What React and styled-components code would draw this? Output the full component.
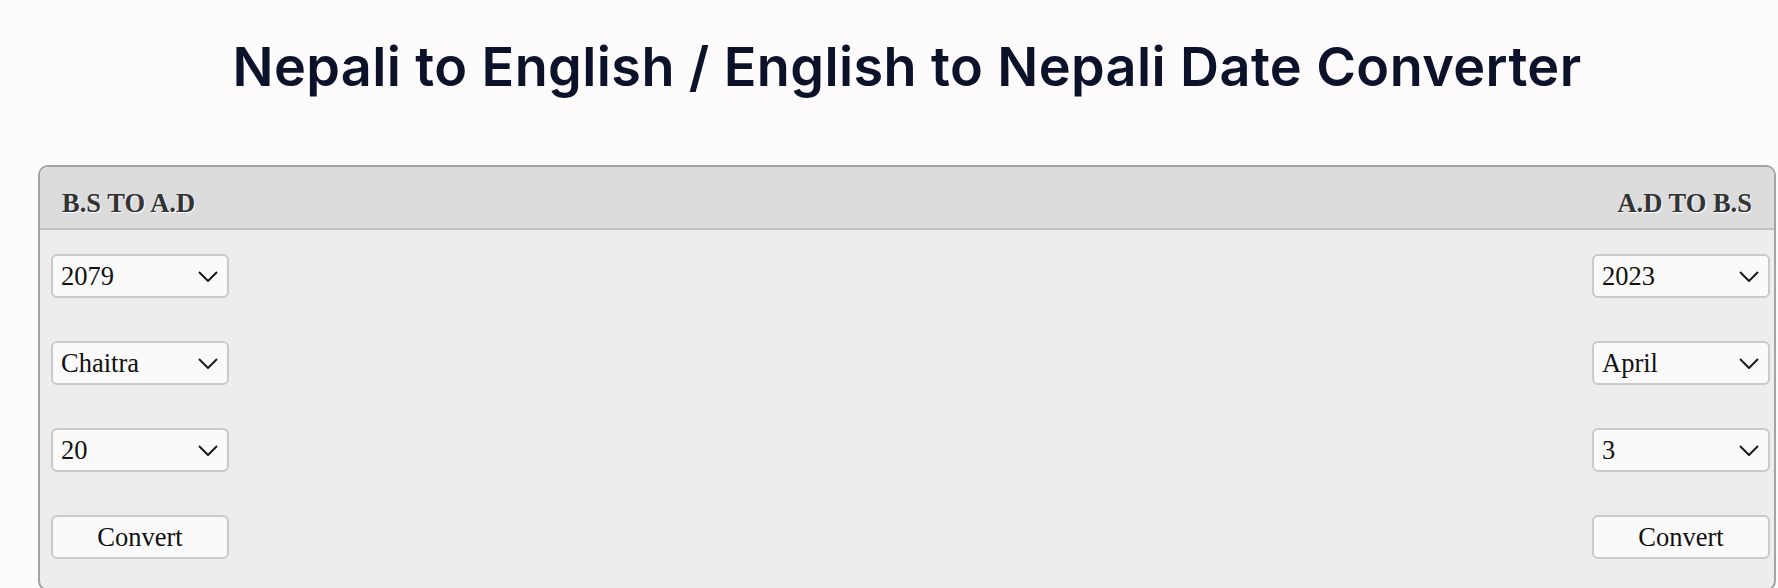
import React from "react";
import styled, { createGlobalStyle } from "styled-components";

const GlobalStyle = createGlobalStyle`
  html, body {
    margin: 0;
    padding: 0;
    background: #fdfbfc;
  }
  body {
    overflow: hidden;
  }
`;

const PageWrapper = styled.div`
  padding: 36px 2px 0 38px;
  min-height: 100vh;
  box-sizing: border-box;
`;

const Title = styled.h1`
  margin: 0 0 67px;
  text-align: center;
  font-family: "Inter", "Noto Sans", sans-serif;
  font-weight: 600;
  font-size: 54px;
  letter-spacing: 0.4px;
  line-height: 62px;
  color: #0b1229;
`;

const Card = styled.div`
  border: 2px solid #a3a3a3;
  border-radius: 10px;
  background: #ededed;
  overflow: hidden;
  font-family: "Liberation Serif", "Times New Roman", serif;
`;

const CardHeader = styled.div`
  display: flex;
  justify-content: space-between;
  align-items: flex-start;
  height: 63px;
  box-sizing: border-box;
  padding: 21px 22px 0 22px;
  background: #dcdcdc;
  border-bottom: 2px solid #c2c2c2;
`;

const HeaderTitle = styled.h2`
  margin: 0;
  font-size: 26.5px;
  line-height: 30px;
  font-weight: 700;
  color: #333;
  text-shadow: 1px 1px 1px #ffffff;
`;

const CardBody = styled.div`
  display: flex;
  justify-content: space-between;
  padding: 24px 4px 30px 11px;
`;

const Column = styled.div`
  display: flex;
  flex-direction: column;
  gap: 43px;
`;

const SelectWrap = styled.div`
  position: relative;
  width: 178px;
  height: 44px;
`;

const Select = styled.select`
  appearance: none;
  -webkit-appearance: none;
  width: 100%;
  height: 100%;
  box-sizing: border-box;
  margin: 0;
  padding: 0 36px 0 8px;
  border: 2px solid #cacaca;
  border-radius: 6px;
  background: #fafafa;
  color: #111;
  font-family: "Liberation Serif", "Times New Roman", serif;
  font-size: 26.5px;
  outline: none;
`;

const Chevron = styled.svg`
  position: absolute;
  right: 11px;
  top: 50%;
  width: 20px;
  height: 11px;
  margin-top: -5px;
  pointer-events: none;
`;

const Button = styled.button`
  width: 178px;
  height: 44px;
  box-sizing: border-box;
  margin: 0;
  padding: 0;
  border: 2px solid #cacaca;
  border-radius: 6px;
  background: #fafafa;
  color: #111;
  font-family: "Liberation Serif", "Times New Roman", serif;
  font-size: 26.5px;
  cursor: pointer;
`;

function Dropdown({ value, options }) {
  return (
    <SelectWrap>
      <Select defaultValue={value}>
        {options.map((o) => (
          <option key={o} value={o}>
            {o}
          </option>
        ))}
      </Select>
      <Chevron viewBox="0 0 20 11" fill="none">
        <path d="M1 1 L10 10 L19 1" stroke="#1a1a1a" strokeWidth="2" />
      </Chevron>
    </SelectWrap>
  );
}

const nepaliMonths = [
  "Baisakh", "Jestha", "Asar", "Shrawan", "Bhadra", "Ashwin",
  "Kartik", "Mangsir", "Poush", "Magh", "Falgun", "Chaitra",
];
const englishMonths = [
  "January", "February", "March", "April", "May", "June", "July",
  "August", "September", "October", "November", "December",
];
const days = Array.from({ length: 32 }, (_, i) => String(i + 1));
const bsYears = Array.from({ length: 21 }, (_, i) => String(2070 + i));
const adYears = Array.from({ length: 21 }, (_, i) => String(2013 + i));

export default function App() {
  return (
    <>
      <GlobalStyle />
      <PageWrapper>
        <Title>Nepali to English / English to Nepali Date Converter</Title>
        <Card>
          <CardHeader>
            <HeaderTitle>B.S TO A.D</HeaderTitle>
            <HeaderTitle>A.D TO B.S</HeaderTitle>
          </CardHeader>
          <CardBody>
            <Column>
              <Dropdown value="2079" options={bsYears} />
              <Dropdown value="Chaitra" options={nepaliMonths} />
              <Dropdown value="20" options={days} />
              <Button>Convert</Button>
            </Column>
            <Column>
              <Dropdown value="2023" options={adYears} />
              <Dropdown value="April" options={englishMonths} />
              <Dropdown value="3" options={days.slice(0, 31)} />
              <Button>Convert</Button>
            </Column>
          </CardBody>
        </Card>
      </PageWrapper>
    </>
  );
}
